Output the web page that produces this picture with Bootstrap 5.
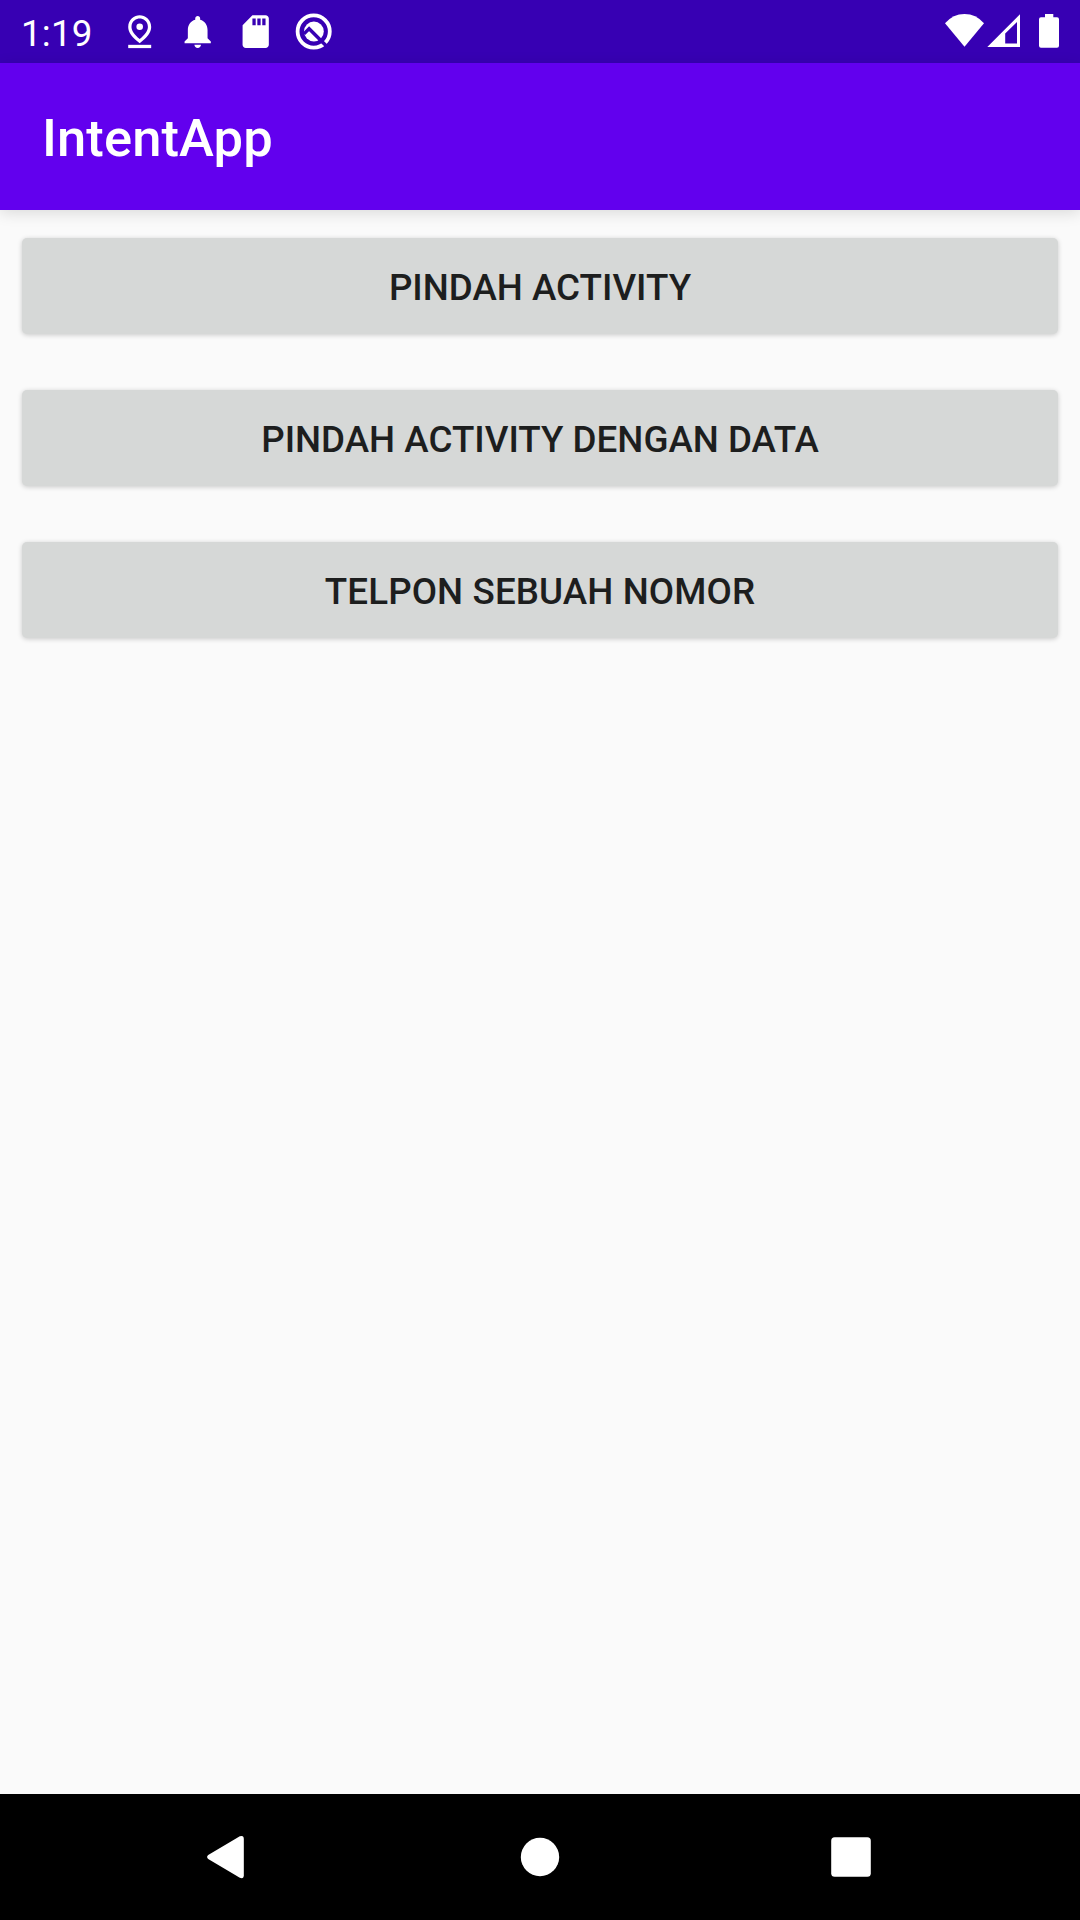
<!DOCTYPE html>
<html lang="id">
<head>
<meta charset="utf-8">
<meta name="viewport" content="width=device-width, initial-scale=1">
<title>IntentApp</title>
<link href="https://cdn.jsdelivr.net/npm/bootstrap@5.3.0/dist/css/bootstrap.min.css" rel="stylesheet">
<style>
  body { font-family: Roboto, "Noto Sans", sans-serif; background: #fafafa; }
  svg { display: block; flex: none; fill: #fff; }
  .status-bar { height: 63px; background: #3700b3; padding: 0 20px 0 21px; }
  .clock { font-size: 36.75px; line-height: 63px; width: 99.3px; padding-top: 3px; letter-spacing: .2px; }
  .notif-icons { gap: 18.6px; }
  .app-bar { height: 147px; background: #6200ee; padding: 3px 42px 0; box-shadow: 0 3px 14px rgba(0,0,0,.13); }
  .app-title { font-size: 52.5px; font-weight: 500; line-height: 62px; letter-spacing: .12px; }
  .actions { padding: 28px 22px 0; gap: 56px; }
  .btn-action { height: 96px; padding: 3px 0 0; border: 0; border-radius: 5px; background: #d6d8d7; color: #1d1e1e;
    font-size: 36.75px; font-weight: 500; line-height: 44px; box-shadow: 0 1px 5px rgba(0,0,0,.2); }
  .btn-action:hover { background: #cbcdcc; color: #1d1e1e; }
  .btn-call { letter-spacing: .1px; }
  .nav-keys { height: 126px; background: #000; gap: 247px; }
</style>
<script src="https://cdn.jsdelivr.net/npm/bootstrap@5.3.0/dist/js/bootstrap.bundle.min.js"></script>
</head>
<body>
<div class="d-flex flex-column vh-100 overflow-hidden">
  <header class="status-bar d-flex align-items-center text-white">
    <span class="clock">1:19</span>
    <div class="notif-icons d-flex align-items-center">
      <svg width="39.4" height="39.4" viewBox="0 0 24 24"><path d="M12 4c1.93 0 5 1.4 5 5.15 0 2.16-1.72 4.67-5 7.32-3.28-2.65-5-5.17-5-7.32C7 5.4 10.07 4 12 4m0-2C8.73 2 5 4.46 5 9.15c0 3.12 2.33 6.41 7 9.85 4.67-3.44 7-6.73 7-9.85C19 4.46 15.27 2 12 2z"/><circle cx="12" cy="9" r="2"/><path d="M5 20h14v2H5z"/></svg>
      <svg width="39.4" height="39.4" viewBox="0 0 24 24"><path d="M12 22c1.1 0 2-.9 2-2h-4c0 1.1.89 2 2 2zm6-6v-5c0-3.07-1.64-5.64-4.5-6.32V4c0-.83-.67-1.5-1.5-1.5s-1.5.67-1.5 1.5v.68C7.63 5.36 6 7.92 6 11v5l-2 2v1h16v-1l-2-2z"/></svg>
      <svg width="39.4" height="39.4" viewBox="0 0 24 24"><path d="M18 2h-8L4.02 8 4 20c0 1.1.9 2 2 2h12c1.1 0 2-.9 2-2V4c0-1.1-.9-2-2-2zm-6 6h-2V4h2v4zm3 0h-2V4h2v4zm3 0h-2V4h2v4z"/></svg>
      <svg width="39.4" height="39.4" viewBox="294.3 11.7 39.4 39.4"><circle cx="314" cy="31.2" r="16.100" fill="none" stroke="#fff" stroke-width="3.8"/><circle cx="314.2" cy="31.2" r="9.9"/><path d="M304.2 33.6L309.4 28.4L329 48" fill="none" stroke="#3700b3" stroke-width="3.4"/></svg>
    </div>
    <div class="d-flex align-items-center ms-auto">
      <svg width="42" height="37" viewBox="944 13 42 37"><path d="M945 23.300Q953 14 964.500 14T984 23.300L964.500 46.700z"/></svg>
      <svg width="36" height="37" viewBox="986 13 36 37"><path fill-rule="evenodd" d="M987.300 47L1020 14.300V47zM1005.200 33.500V43.500H1017V22z"/></svg>
      <svg class="ms-3" width="22" height="37" viewBox="1038 13 22 37"><path d="M1045 14h8.300v3.300h3.700q2 0 2 2v26.500q0 2-2 2h-16q-2 0-2-2V19.300q0-2 2-2h4z"/></svg>
    </div>
  </header>
  <nav class="app-bar d-flex align-items-center text-white">
    <h1 class="app-title m-0">IntentApp</h1>
  </nav>
  <main class="actions d-flex flex-column flex-grow-1">
    <button type="button" class="btn btn-action w-100">PINDAH ACTIVITY</button>
    <button type="button" class="btn btn-action w-100">PINDAH ACTIVITY DENGAN DATA</button>
    <button type="button" class="btn btn-action btn-call w-100">TELPON SEBUAH NOMOR</button>
  </main>
  <footer class="nav-keys d-flex align-items-center justify-content-center">
    <svg width="64" height="64" viewBox="197 1825 64 64"><path d="M208.200 1855.100L239.800 1836.300q4-1.500 4 2.500v36.500q0 4-4 2.500L208.200 1859q-2.200-2 0-3.900z"/></svg>
    <svg width="64" height="64" viewBox="508 1825 64 64"><circle cx="540" cy="1857" r="19.200"/></svg>
    <svg width="64" height="64" viewBox="819 1825 64 64"><rect x="831.200" y="1837.200" width="39.600" height="39.600" rx="3.500"/></svg>
  </footer>
</div>
</body>
</html>
